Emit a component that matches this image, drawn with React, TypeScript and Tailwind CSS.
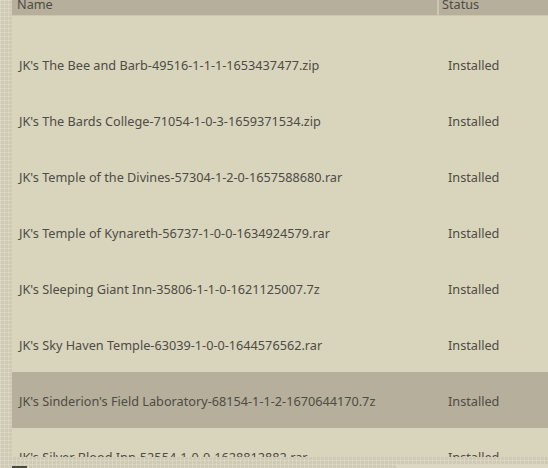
import React from 'react';

type Mod = { name: string; status: string };

const mods: Mod[] = [
  { name: "JK's The Bee and Barb-49516-1-1-1-1653437477.zip", status: 'Installed' },
  { name: "JK's The Bards College-71054-1-0-3-1659371534.zip", status: 'Installed' },
  { name: "JK's Temple of the Divines-57304-1-2-0-1657588680.rar", status: 'Installed' },
  { name: "JK's Temple of Kynareth-56737-1-0-0-1634924579.rar", status: 'Installed' },
  { name: "JK's Sleeping Giant Inn-35806-1-1-0-1621125007.7z", status: 'Installed' },
  { name: "JK's Sky Haven Temple-63039-1-0-0-1644576562.rar", status: 'Installed' },
  { name: "JK's Sinderion's Field Laboratory-68154-1-1-2-1670644170.7z", status: 'Installed' },
  { name: "JK's Silver Blood Inn-52554-1-0-0-1628812882.rar", status: 'Installed' },
];

const SELECTED = 6;

const pattern =
  'bg-[#cfcab3] bg-[linear-gradient(to_right,rgba(255,255,255,0.18)_1px,transparent_1px),linear-gradient(to_bottom,rgba(255,255,255,0.18)_1px,transparent_1px)] bg-[size:4px_4px]';

export default function App() {
  return (
    <div
      className={`flex h-[468px] w-[548px] flex-col overflow-hidden text-[12.7px] text-[#4d4c45] ${pattern}`}
      style={{ fontFamily: '"Noto Sans", "Open Sans", sans-serif' }}
    >
      <div className="flex min-h-0 flex-1">
        <div className="w-[12px] shrink-0" />
        <div className="flex min-w-0 flex-1 flex-col overflow-hidden bg-[#d9d4bc]">
          {/* header */}
          <div className="flex h-[16px] shrink-0 overflow-hidden border-b border-[#ccc6ae] bg-[#b5af9b]">
            <div className="w-[427px] shrink-0 border-r-2 border-[#cdc7b1] pl-[5px]">
              <span className="block -mt-[4px] leading-[16px]">Name</span>
            </div>
            <div className="flex-1 pl-[3px]">
              <span className="block -mt-[4px] leading-[16px]">Status</span>
            </div>
          </div>
          <div className="h-[20px] shrink-0" />
          {mods.map((m, i) => (
            <div
              key={m.name}
              className={`flex h-[56px] shrink-0 items-center pt-[3px] ${i === SELECTED ? 'bg-[#b5af9b]' : ''}`}
            >
              <div className="w-[429px] shrink-0 truncate pl-[7px]">{m.name}</div>
              <div className="flex-1 pl-[7px]">{m.status}</div>
            </div>
          ))}
        </div>
      </div>
      {/* bottom strip */}
      <div className="flex h-[11px] shrink-0 items-end">
        <div className="w-[12px] shrink-0" />
        <div className="h-[2px] w-[15px] bg-[#4c4a40]" />
        <div className="flex-1" />
        <div className="h-[3px] w-[151px] bg-[#dcd7c2]" />
      </div>
    </div>
  );
}
